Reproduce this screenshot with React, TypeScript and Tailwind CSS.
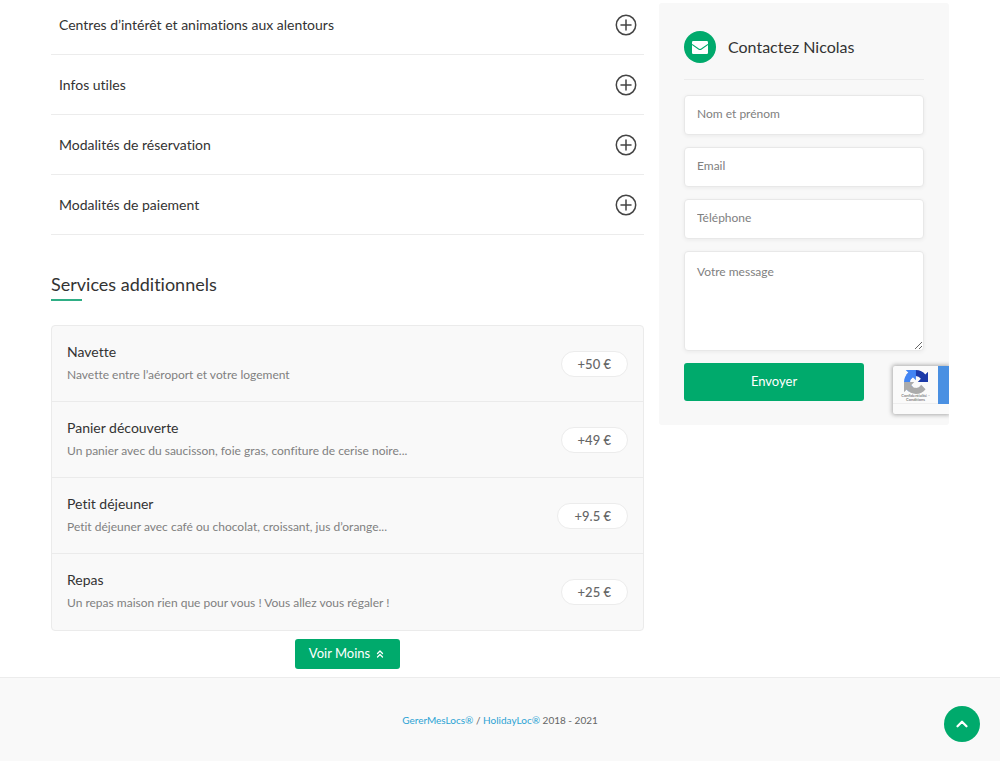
import { ChevronsUp, ChevronUp } from "lucide-react";

interface Service {
  name: string;
  description: string;
  price: string;
}

const sections = [
  "Centres d’intérêt et animations aux alentours",
  "Infos utiles",
  "Modalités de réservation",
  "Modalités de paiement",
];

const services: Service[] = [
  {
    name: "Navette",
    description: "Navette entre l’aéroport et votre logement",
    price: "+50 €",
  },
  {
    name: "Panier découverte",
    description: "Un panier avec du saucisson, foie gras, confiture de cerise noire...",
    price: "+49 €",
  },
  {
    name: "Petit déjeuner",
    description: "Petit déjeuner avec café ou chocolat, croissant, jus d’orange...",
    price: "+9.5 €",
  },
  {
    name: "Repas",
    description: "Un repas maison rien que pour vous ! Vous allez vous régaler !",
    price: "+25 €",
  },
];

const fields = [
  { name: "name", label: "Nom et prénom", type: "text" },
  { name: "email", label: "Email", type: "email" },
  { name: "phone", label: "Téléphone", type: "tel" },
];

const fieldClass =
  "block w-full rounded border border-[#e8e8e8] bg-white px-3 text-xs text-[#333] shadow-[0_1px_4px_rgba(0,0,0,0.06)] placeholder:text-[#808080]";

function PlusIcon() {
  return (
    <svg
      viewBox="0 0 22 22"
      className="-mr-px size-[22px]"
      fill="none"
      stroke="#444"
      strokeWidth="1.5"
      aria-hidden="true"
    >
      <circle cx="11" cy="11" r="9.7" />
      <path d="M11 6v10M6 11h10" strokeLinecap="round" />
    </svg>
  );
}

function SectionList() {
  return (
    <div className="-mt-[5px]">
      {sections.map((title) => (
        <button
          key={title}
          type="button"
          aria-expanded="false"
          className="flex h-[60px] w-full items-center justify-between border-b border-[#ececec] px-2 text-left text-sm text-[#333]"
        >
          {title}
          <PlusIcon />
        </button>
      ))}
    </div>
  );
}

function ServiceList() {
  return (
    <section className="mt-9">
      <h2 className="text-lg leading-[26px] text-[#333]">Services additionnels</h2>
      <div className="mt-[2px] h-[2px] w-[31px] bg-[#2fae85]" />
      <ul className="mt-6 divide-y divide-[#ebebeb] rounded border border-[#ebebeb] bg-[#f9f9f9]">
        {services.map((service) => (
          <li key={service.name} className="flex h-[76px] items-center justify-between px-[15px]">
            <div>
              <h3 className="text-sm leading-[22px] text-[#333]">{service.name}</h3>
              <p className="text-xs leading-6 text-[#808080]">{service.description}</p>
            </div>
            <span className="rounded-full border border-[#ececec] bg-white px-4 text-[13px] leading-6 font-medium text-[#666]">
              {service.price}
            </span>
          </li>
        ))}
      </ul>
      <button
        type="button"
        className="mx-auto mt-2 flex h-[30px] items-center gap-1 rounded-[3px] bg-[#00aa6c] px-[14px] text-[13px] text-white"
      >
        Voir Moins
        <ChevronsUp className="size-3" strokeWidth={2.5} />
      </button>
    </section>
  );
}

function MailIcon() {
  return (
    <svg viewBox="0 0 16 13" className="h-[13px] w-4" aria-hidden="true">
      <rect width="16" height="13" rx="1.2" fill="#fff" />
      <path d="M0 3.4 6.6 8q1.4.9 2.8 0L16 3.4" fill="none" stroke="#00aa6c" strokeWidth="1.1" />
    </svg>
  );
}

function RecaptchaBadge() {
  return (
    <div className="-mr-[25px] mt-[3px] flex h-12 w-14 items-start rounded-l-[2px] bg-[#fafafa] shadow-[0_0_4px_1px_#aaa]">
      <div className="flex h-[38px] flex-1 flex-col items-center border-b border-[#eee] pt-1">
        <svg viewBox="0 0 64 64" className="size-6 shrink-0" aria-hidden="true">
          <path
            d="M64 31.955c-.001-.46-.012-.918-.033-1.373V4.64l-7.173 7.173C50.924 4.627 41.996.045 32 .045c-10.403 0-19.645 4.962-25.505 12.646l11.757 11.88a15.58 15.58 0 0 1 4.763-5.344c2.054-1.603 4.964-2.913 8.983-2.913.486 0 .861.057 1.136.164 4.98.393 9.296 3.141 11.837 7.13l-8.322 8.322z"
            fill="#1c3aa9"
          />
          <path
            d="M31.862.001c-.459.001-.916.013-1.371.034H4.624l7.171 7.171C4.609 13.077 0 22.005 0 32c0 10.403 4.962 19.645 12.646 25.505l11.88-11.757a15.58 15.58 0 0 1-5.344-4.763c-1.603-2.054-2.913-4.964-2.913-8.983 0-.486.057-.861.164-1.136.393-4.98 3.141-9.296 7.13-11.837l8.322 8.322z"
            fill="#4285f4"
          />
          <path
            d="M.001 32.045c.001.46.012.918.034 1.373V59.36l7.171-7.173C13.077 59.373 22.005 63.955 32 63.955c10.403 0 19.645-4.962 25.505-12.646L45.748 39.429a15.58 15.58 0 0 1-4.763 5.344c-2.054 1.603-4.964 2.913-8.983 2.913-.486 0-.861-.057-1.136-.164-4.98-.393-9.296-3.141-11.837-7.13l8.322-8.322z"
            fill="#ababab"
          />
        </svg>
        <span className="text-center text-[4px] leading-[4px] text-[#555]">
          Confidentialité -<br />
          Conditions
        </span>
      </div>
      <div className="h-[38px] w-[11px] bg-[#4a90e2]" />
    </div>
  );
}

function ContactCard() {
  return (
    <aside className="mt-[3px] w-[290px] shrink-0 self-start overflow-hidden rounded-[3px] bg-[#f8f8f8] px-[25px] pt-7 pb-[11px]">
      <div className="flex items-center gap-3 border-b border-[#ececec] pb-4">
        <span className="flex size-8 items-center justify-center rounded-full bg-[#00aa6c]">
          <MailIcon />
        </span>
        <h2 className="text-base text-[#333]">Contactez Nicolas</h2>
      </div>
      <form className="mt-[15px] space-y-3">
        {fields.map((field) => (
          <input
            key={field.name}
            name={field.name}
            type={field.type}
            placeholder={field.label}
            aria-label={field.label}
            className={`${fieldClass} h-10 pb-1`}
          />
        ))}
        <textarea
          name="message"
          placeholder="Votre message"
          aria-label="Votre message"
          className={`${fieldClass} h-[100px] py-3`}
        />
        <div className="flex items-start justify-between">
          <button type="submit" className="h-[38px] w-3/4 rounded-[3px] bg-[#00aa6c] text-[13px] text-white">
            Envoyer
          </button>
          <RecaptchaBadge />
        </div>
      </form>
    </aside>
  );
}

export default function App() {
  return (
    <div className="flex min-h-screen flex-col overflow-hidden bg-white font-['Lato',sans-serif] [font-variant-ligatures:none]">
      <main className="flex gap-[15px] pr-[51px] pl-[51px]">
        <div className="min-w-0 flex-1">
          <SectionList />
          <ServiceList />
        </div>
        <ContactCard />
      </main>
      <footer className="mt-2 flex-1 border-t border-[#ececec] bg-[#f9f9f9] py-8 text-center text-[10px] leading-5 text-[#666]">
        <a href="#gerermeslocs" className="text-[#2ba3d4]">
          GererMesLocs®
        </a>{" "}
        /{" "}
        <a href="#holidayloc" className="text-[#2ba3d4]">
          HolidayLoc®
        </a>{" "}
        2018 - 2021
      </footer>
      <button
        type="button"
        aria-label="Haut de page"
        className="fixed right-5 bottom-[19px] flex size-9 items-center justify-center rounded-full bg-[#00aa6c] text-white"
      >
        <ChevronUp className="size-[18px]" strokeWidth={3} />
      </button>
    </div>
  );
}
